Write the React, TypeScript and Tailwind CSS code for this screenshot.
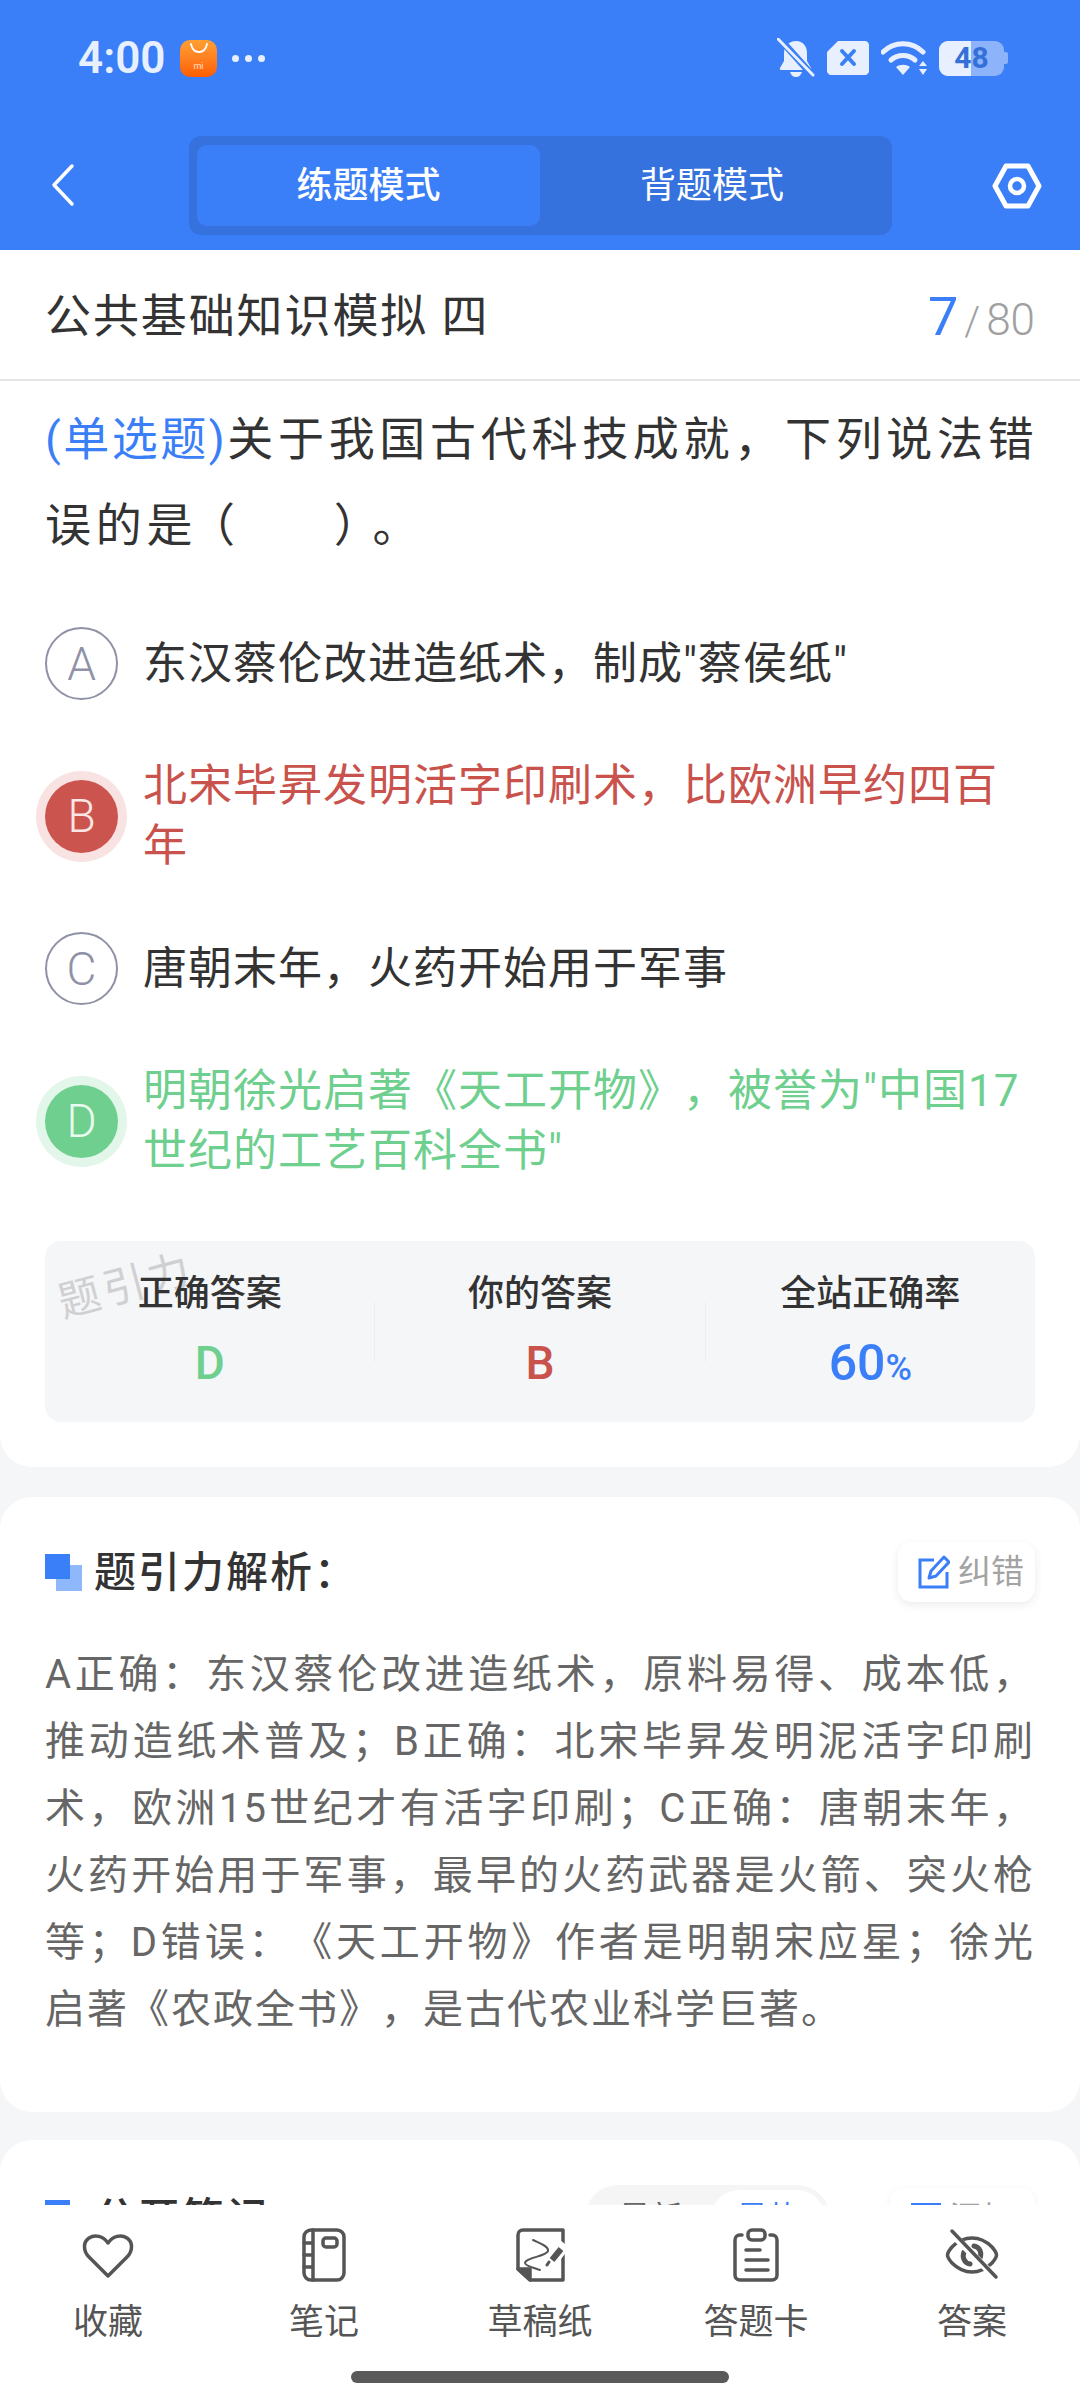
import type { ReactNode } from 'react';

const options = [
  { key: 'A', text: '东汉蔡伦改进造纸术，制成"蔡侯纸"', state: 'idle' },
  { key: 'B', text: '北宋毕昇发明活字印刷术，比欧洲早约四百年', state: 'wrong' },
  { key: 'C', text: '唐朝末年，火药开始用于军事', state: 'idle' },
  { key: 'D', text: '明朝徐光启著《天工开物》，被誉为"中国17世纪的工艺百科全书"', state: 'right' },
];

function StatusBar() {
  return (
    <div className="h-[116px] flex items-center pl-[78px] pr-[72px] text-[#e8f0ff]">
      <span className="text-[44px] font-semibold leading-none w-[102px]">4:00</span>
      <div className="w-[37px] h-[37px] rounded-[10px] bg-linear-to-b from-[#ff9f33] to-[#ff5c00] flex flex-col items-center justify-between pt-[3px] pb-[6px]">
        <svg className="w-[18px] h-[10px]" viewBox="0 0 18 10" fill="none">
          <path d="M1 1c1 5 4 8 8 8s7-3 8-8" stroke="#fff" strokeWidth="1.8" strokeLinecap="round" />
        </svg>
        <span className="text-[9px] leading-none text-[#ffe3c8]">mi</span>
      </div>
      <div className="flex gap-[6px] ml-[15px]">
        <span className="w-[7px] h-[7px] rounded-full bg-[#e8f0ff]" />
        <span className="w-[7px] h-[7px] rounded-full bg-[#e8f0ff]" />
        <span className="w-[7px] h-[7px] rounded-full bg-[#e8f0ff]" />
      </div>

      <div className="ml-auto flex items-center">
        {/* muted bell */}
        <svg className="w-[38px] h-[40px]" viewBox="0 0 38 40" fill="none">
          <path d="M19 3c7 0 11 5 11 12v8l4 7c.5 1 0 2-1 2H4c-1 0-1.500-1-1-2l4-7v-8C7 8 12 3 19 3z" fill="#e8f0ff" />
          <path d="M13 34h12c-1 3-3 5-6 5s-5-2-6-5z" fill="#e8f0ff" />
          <path d="M2 0l34 38" stroke="#3b7ff8" strokeWidth="7" />
          <path d="M1 1l35 36" stroke="#e8f0ff" strokeWidth="3" strokeLinecap="round" />
        </svg>
        {/* sim */}
        <svg className="w-[44px] h-[36px] ml-[11px]" viewBox="0 0 44 36" fill="none">
          <path d="M12 1h27c2 0 4 2 4 4v26c0 2-2 4-4 4H5c-2 0-4-2-4-4V12z" fill="#e8f0ff" />
          <path d="M16 11l12 13M28 11L16 24" stroke="#3b7ff8" strokeWidth="4" strokeLinecap="round" />
        </svg>
        {/* wifi */}
        <svg className="w-[48px] h-[36px] ml-[11px]" viewBox="0 0 48 36" fill="none">
          <path d="M2 12C13 1 31 1 42 12" stroke="#e8f0ff" strokeWidth="5" strokeLinecap="round" />
          <path d="M10 20c7-6 17-6 24 0" stroke="#e8f0ff" strokeWidth="5" strokeLinecap="round" />
          <path d="M15 27c4-3 10-3 14 0l-7 8z" fill="#e8f0ff" />
          <path d="M42 21l4 5h-8zM42 35l4-6h-8z" fill="#e8f0ff" />
        </svg>
        {/* battery */}
        <div className="relative w-[65px] h-[35px] ml-[10px] rounded-[9px] overflow-hidden bg-[#8db4fb] flex items-center justify-center">
          <div className="absolute left-0 top-0 bottom-0 w-[32px] bg-[#e8f0ff]" />
          <span className="relative text-[30px] font-bold leading-none text-[#3470d8]">48</span>
        </div>
        <div className="w-[4px] h-[12px] rounded-r-[2px] bg-[#8db4fb]" />
      </div>
    </div>
  );
}

function Header() {
  return (
    <header className="shrink-0 h-[250px] bg-[#3b7ff8]">
      <StatusBar />
      <div className="mt-[20px] flex items-center">
        <div className="w-[189px] pl-[50px] -mt-[2px]">
          <svg className="w-[26px] h-[44px]" viewBox="0 0 26 44" fill="none">
            <path d="M22 3L4 22l18 19" stroke="#fff" strokeWidth="3.500" strokeLinecap="round" strokeLinejoin="round" />
          </svg>
        </div>
        <div className="w-[703px] h-[99px] rounded-[12px] bg-[#3572dd] p-[8px] py-[9px] flex text-white text-[36px] font-medium">
          <div className="w-[343px] rounded-[10px] bg-[#3b7ff8] flex items-center justify-center">练题模式</div>
          <div className="flex-1 flex items-center justify-center font-normal">背题模式</div>
        </div>
        <div className="flex-1 flex justify-end pr-[38px]">
          <svg className="w-[50px] h-[46px]" viewBox="0 0 50 46" fill="none">
            <path d="M14 3h22l11 20-11 20H14L3 23z" stroke="#fff" strokeWidth="5" strokeLinejoin="round" />
            <circle cx="25" cy="23" r="7" stroke="#fff" strokeWidth="4.500" />
          </svg>
        </div>
      </div>
    </header>
  );
}

function OptionRow({ optKey, text, state }: { optKey: string; text: string; state: string }) {
  const textColor = state === 'wrong' ? 'text-[#c9524d]' : state === 'right' ? 'text-[#6fcf8e]' : 'text-[#333]';
  const badge =
    state === 'wrong'
      ? 'bg-[#cc544f] text-[#fbe6e4] shadow-[0_0_0_9px_#f8e3e2]'
      : state === 'right'
        ? 'bg-[#6fcf8e] text-[#eafbf0] shadow-[0_0_0_9px_#e3f6ea]'
        : 'border-2 border-[#8f92a6] text-[#8f92a6]';
  return (
    <div className="flex items-center gap-[25px]">
      <div className={`shrink-0 w-[73px] h-[73px] rounded-full flex items-center justify-center text-[46px] font-light leading-none ${badge}`}>
        {optKey}
      </div>
      <div className={`flex-1 text-[44px] leading-[60px] tracking-[1px] ${textColor}`}>{text}</div>
    </div>
  );
}

function Stat({ label, children }: { label: string; children: ReactNode }) {
  return (
    <div className="flex-1 flex flex-col items-center">
      <div className="text-[36px] leading-[50px] font-medium text-[#333]">{label}</div>
      <div className="mt-[14px] h-[60px] flex items-center justify-center">{children}</div>
    </div>
  );
}

function QuestionCard() {
  return (
    <section className="bg-white rounded-b-[32px] px-[45px] pt-[15px] pb-[45px]">
      <p className="-mr-[10px] text-[46px] leading-[86px] tracking-[4.700px] text-[#333]">
        <span className="text-[#3b7ff8] tracking-[2.500px]">(单选题)</span>
        关于我国古代科技成就，下列说法错误的是
        <span className="-ml-[8px]">（</span>
        <span className="inline-block w-[94px]" />
        ）<span className="-ml-[12px]">。</span>
      </p>
      <div className="mt-[59px] flex flex-col gap-[56px]">
        {options.map((opt) => (
          <OptionRow key={opt.key} optKey={opt.key} text={opt.text} state={opt.state} />
        ))}
      </div>
      <div className="relative mt-[60px] h-[181px] rounded-[16px] bg-[#f4f6f8] pt-[28px] flex">
        <span className="absolute left-[12px] top-[24px] -rotate-[15deg] text-[42px] leading-none tracking-[4px] text-[#d0d0d3]">
          题引力
        </span>
        <div className="relative flex-1 flex">
          <Stat label="正确答案">
            <span className="text-[46px] font-medium leading-none text-[#6fcf8e]">D</span>
          </Stat>
          <div className="w-px h-[60px] self-center -mt-[28px] bg-[#eceef1]" />
          <Stat label="你的答案">
            <span className="text-[46px] font-medium leading-none text-[#c9524d]">B</span>
          </Stat>
          <div className="w-px h-[60px] self-center -mt-[28px] bg-[#eceef1]" />
          <Stat label="全站正确率">
            <span className="text-[50px] font-medium leading-none text-[#3b7ff8]">
              60<span className="text-[36px]">%</span>
            </span>
          </Stat>
        </div>
      </div>
    </section>
  );
}

function SectionMark() {
  return (
    <div className="relative w-[37px] h-[37px] shrink-0">
      <div className="absolute right-0 bottom-0 w-[26px] h-[26px] bg-[#8fb8fb]" />
      <div className="absolute left-0 top-0 w-[25px] h-[25px] bg-[#3b7ff8]" />
    </div>
  );
}

function AnalysisCard() {
  return (
    <section className="mt-[30px] h-[615px] bg-white rounded-[32px] px-[45px] pt-[45px]">
      <div className="flex items-center h-[60px]">
        <SectionMark />
        <h2 className="ml-[12px] text-[42px] font-medium tracking-[2px] text-[#333]">题引力解析：</h2>
        <button
          type="button"
          className="ml-auto w-[137px] h-[60px] rounded-[14px] bg-white shadow-[0_3px_10px_rgba(0,0,0,0.08)] flex items-center pl-[20px] gap-[8px] text-[33px] text-[#a3a3a3]"
        >
          <svg className="w-[32px] h-[34px] shrink-0" viewBox="0 0 32 34" fill="none">
            <path d="M16 5H2v27h27V17" stroke="#3b7ff8" strokeWidth="3" />
            <path d="M26 2l5 5-13 14-7 2 2-7z" stroke="#3b7ff8" strokeWidth="3" strokeLinejoin="round" />
          </svg>
          纠错
        </button>
      </div>
      <p className="mt-[39px] text-[40px] leading-[67px] tracking-[2px] text-justify text-[#666]">
        A正确：东汉蔡伦改进造纸术，原料易得、成本低，推动造纸术普及；B正确：北宋毕昇发明泥活字印刷术，欧洲15世纪才有活字印刷；C正确：唐朝末年，火药开始用于军事，最早的火药武器是火箭、突火枪等；D错误：《天工开物》作者是明朝宋应星；徐光启著《农政全书》，是古代农业科学巨著。
      </p>
    </section>
  );
}

function NotesCard() {
  return (
    <section className="mt-[28px] h-[200px] bg-white rounded-t-[32px] px-[45px] pt-[48px]">
      <div className="flex items-center h-[60px]">
        <SectionMark />
        <h2 className="ml-[12px] text-[42px] font-medium tracking-[2px] text-[#333]">公开笔记</h2>
        <div className="ml-auto w-[245px] h-[66px] rounded-[33px] bg-[#f5f5f5] flex items-center p-[5px] text-[32px]">
          <span className="flex-1 text-center text-[#666]">最新</span>
          <span className="w-[114px] h-full rounded-[28px] bg-white flex items-center justify-center text-[#3b7ff8]">最热</span>
        </div>
        <div className="ml-[60px] w-[145px] h-[60px] rounded-[14px] bg-white shadow-[0_2px_8px_rgba(0,0,0,0.06)] flex items-center justify-center gap-[8px] text-[32px] text-[#a3a3a3]">
          <span className="w-[30px] h-[30px] border-t-[3px] border-[#3b7ff8]" />
          添加
        </div>
      </div>
    </section>
  );
}

const navItems: { label: string; icon: ReactNode }[] = [
  {
    label: '收藏',
    icon: <path d="M28 49L9 30C3 24 3 15 9 11c6-4 14-2 19 5 5-7 13-9 19-5 6 4 6 13 0 19z" />,
  },
  {
    label: '笔记',
    icon: (
      <>
        <rect x="8" y="3" width="40" height="50" rx="7" />
        <path d="M17 3v50M8 16h9M8 28h9M8 40h9" />
        <rect x="27" y="11" width="14" height="9" rx="3" />
      </>
    ),
  },
  {
    label: '草稿纸',
    icon: (
      <>
        <path d="M11 3h40v50H18L6 42V8c0-3 2-5 5-5z" />
        <path d="M6 42h12v11z" fill="#555" />
        <path d="M21 13c6 3 16 6 15 11-1 5-23 7-23 12 0 3 9 5 15 7" strokeWidth="2" />
        <path d="M36 39L53 17" stroke="#fff" strokeWidth="12" strokeLinecap="butt" />
        <path d="M35 38l2-3" strokeWidth="3" />
        <path d="M40 33l9-11" strokeWidth="6" strokeLinecap="butt" />
      </>
    ),
  },
  {
    label: '答题卡',
    icon: (
      <>
        <path d="M14 8h-2c-3 0-5 2-5 5v35c0 3 2 5 5 5h32c3 0 5-2 5-5V13c0-3-2-5-5-5h-2" />
        <rect x="20" y="3" width="17" height="10" rx="4" />
        <path d="M18 23h14M18 33h22M18 43h22" />
      </>
    ),
  },
  {
    label: '答案',
    icon: (
      <>
        <path d="M8 20C2 27 2 29 8 36c12 12 28 12 40 0 6-7 6-9 0-16C36 8 20 8 8 20z" />
        <path d="M20 25c-2 5 0 11 6 12M36 31c2-5 0-11-6-12" strokeWidth="5" />
        <path d="M6 5l46 46" stroke="#fff" strokeWidth="7" />
        <path d="M8 4l44 46" />
      </>
    ),
  },
];

function BottomNav() {
  return (
    <nav className="shrink-0 h-[195px] bg-white flex flex-col items-center pt-[22px]">
      <div className="w-full grid grid-cols-5">
        {navItems.map((item) => (
          <div key={item.label} className="flex flex-col items-center">
            <svg className="w-[56px] h-[56px]" viewBox="0 0 56 56" fill="none" stroke="#555" strokeWidth="3.500" strokeLinecap="round" strokeLinejoin="round">
              {item.icon}
            </svg>
            <span className="mt-[17px] text-[35px] leading-[46px] text-[#555]">{item.label}</span>
          </div>
        ))}
      </div>
      <div className="mt-[25px] w-[378px] h-[12px] rounded-full bg-[#5a5a5a]" />
    </nav>
  );
}

export default function App() {
  return (
    <div className="w-[1080px] h-[2400px] flex flex-col overflow-hidden bg-[#f4f6f8] font-['Roboto','Noto_Sans_CJK_SC',sans-serif] [text-spacing-trim:space-all]">
      <Header />
      <div className="shrink-0 h-[131px] bg-white border-b-2 border-[#e5e5e5] px-[45px] pt-[3px] flex items-center justify-between">
        <h1 className="text-[46px] font-normal tracking-[1.900px] text-[#333]">公共基础知识模拟 四</h1>
        <div className="flex items-baseline">
          <span className="text-[54px] text-[#3b7ff8]">7</span>
          <span className="mx-[6px] text-[40px] font-light text-[#a0a0a0]">/</span>
          <span className="text-[44px] font-light text-[#a0a0a0]">80</span>
        </div>
      </div>
      <main className="flex-1 min-h-0 overflow-hidden">
        <QuestionCard />
        <AnalysisCard />
        <NotesCard />
      </main>
      <BottomNav />
    </div>
  );
}
